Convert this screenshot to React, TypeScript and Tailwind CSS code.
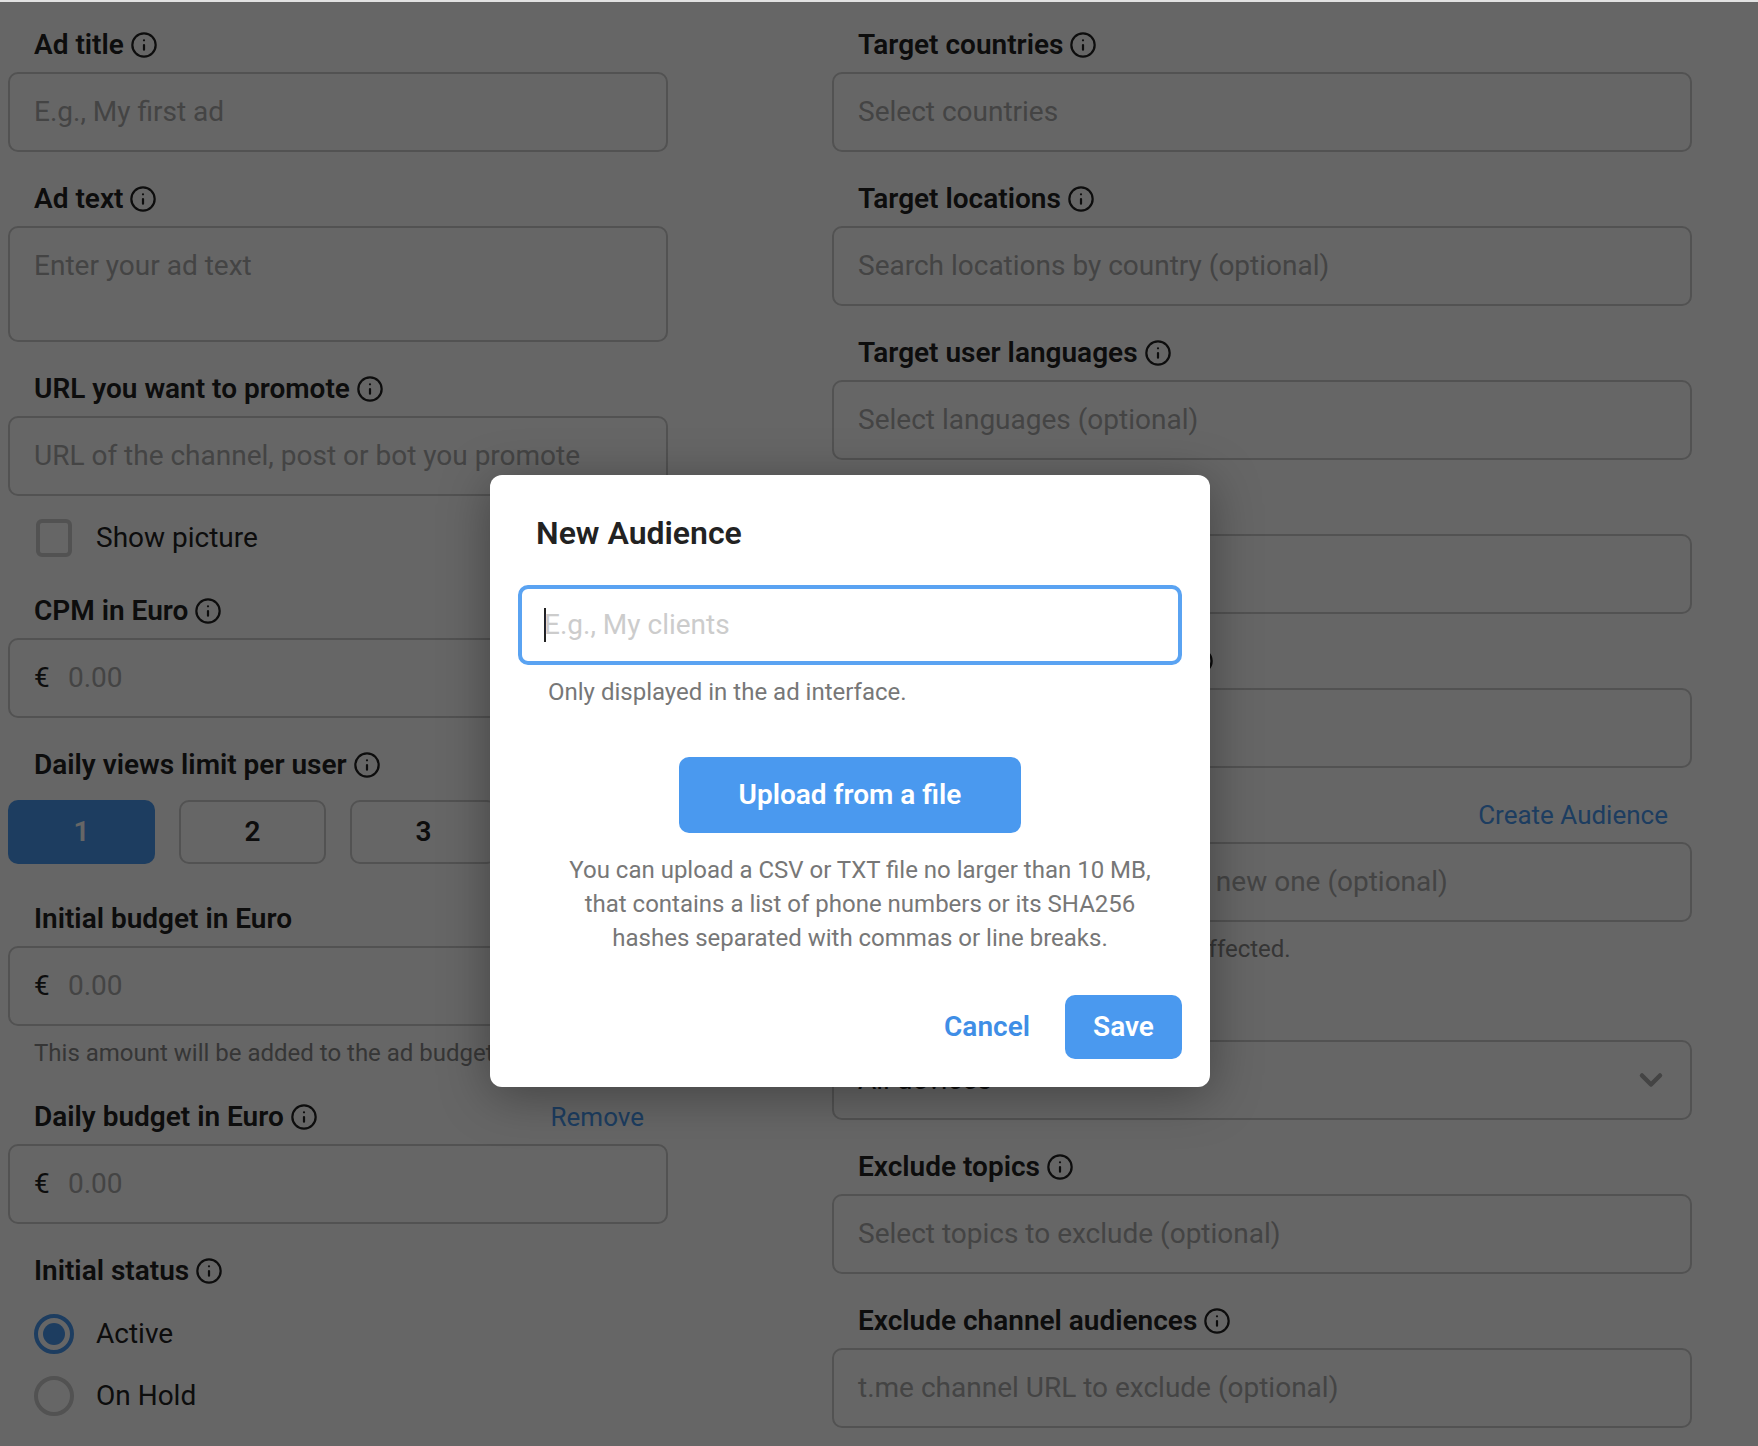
import { ReactNode } from "react";
import { ChevronDown, Info } from "lucide-react";

function Label({ text, info = true, action }: { text: string; info?: boolean; action?: string }) {
  return (
    <div className="mb-[13px] flex h-[28px] items-center pl-[26px] pr-[24px] text-[28px] font-semibold text-[#222222]">
      <span>{text}</span>
      {info && <Info className="ml-[6px] h-[28px] w-[28px] shrink-0" strokeWidth={1.9} />}
      {action && <span className="ml-auto text-[26px] font-normal text-[#4a99ef]">{action}</span>}
    </div>
  );
}

function Box({ children, h = "h-[80px]" }: { children?: ReactNode; h?: string }) {
  return (
    <div className={`${h} rounded-[10px] border-2 border-[#cccccc] px-[24px] text-[28px] text-[#aaaaaa]`}>
      {children}
    </div>
  );
}

function TextField({ label, placeholder, action }: { label: string; placeholder: string; action?: string }) {
  return (
    <div className="mb-[33px]">
      <Label text={label} action={action} />
      <Box>
        <div className="flex h-full items-center">{placeholder}</div>
      </Box>
    </div>
  );
}

function MoneyField({ label, info, action }: { label: string; info?: boolean; action?: string }) {
  return (
    <div>
      <Label text={label} info={info} action={action} />
      <Box>
        <div className="flex h-full items-center">
          <span className="w-[34px] text-[#222222]">€</span>
          <span>0.00</span>
        </div>
      </Box>
    </div>
  );
}

function LeftColumn() {
  return (
    <div>
      <TextField label="Ad title" placeholder="E.g., My first ad" />
      <div className="mb-[33px]">
        <Label text="Ad text" />
        <Box h="h-[116px]">
          <div className="pt-[22px] leading-[32px]">Enter your ad text</div>
        </Box>
      </div>
      <div>
        <Label text="URL you want to promote" />
        <Box>
          <div className="flex h-full items-center">URL of the channel, post or bot you promote</div>
        </Box>
      </div>
      <div className="mt-[23px] flex h-[38px] items-center pl-[28px] text-[28px] text-[#222222]">
        <span className="h-[38px] w-[36px] rounded-[6px] border-4 border-[#cccccc]" />
        <span className="ml-[24px]">Show picture</span>
      </div>
      <div className="mt-[40px]">
        <MoneyField label="CPM in Euro" />
      </div>
      <div className="mt-[33px]">
        <div className="pb-[8px]">
          <Label text="Daily views limit per user" />
        </div>
        <div className="grid grid-cols-4 gap-[24px] text-[28px] font-semibold text-[#222222]">
          <div className="flex h-[64px] items-center justify-center rounded-[10px] bg-[#4a99ef] text-white">1</div>
          {["2", "3", "4"].map((n) => (
            <div key={n} className="flex h-[64px] items-center justify-center rounded-[10px] border-2 border-[#cccccc]">
              {n}
            </div>
          ))}
        </div>
      </div>
      <div className="mt-[41px]">
        <MoneyField label="Initial budget in Euro" info={false} />
      </div>
      <div className="mt-[10px] h-[34px] whitespace-nowrap pl-[26px] text-[24px] leading-[34px] text-[#888888]">
        This amount will be added to the ad budget immediately.
      </div>
      <div className="mt-[33px]">
        <MoneyField label="Daily budget in Euro" action="Remove" />
      </div>
      <div className="mt-[33px]">
        <Label text="Initial status" />
      </div>
      <div className="mt-[29px] flex h-[40px] items-center pl-[26px] text-[28px] text-[#222222]">
        <span className="flex h-[40px] w-[40px] items-center justify-center rounded-full border-[4px] border-[#4a99ef]">
          <span className="h-[22px] w-[22px] rounded-full bg-[#4a99ef]" />
        </span>
        <span className="ml-[22px]">Active</span>
      </div>
      <div className="mt-[22px] flex h-[40px] items-center pl-[26px] text-[28px] text-[#222222]">
        <span className="h-[40px] w-[40px] rounded-full border-[4px] border-[#cccccc]" />
        <span className="ml-[22px]">On Hold</span>
      </div>
    </div>
  );
}

function RightColumn() {
  return (
    <div>
      <TextField label="Target countries" placeholder="Select countries" />
      <TextField label="Target locations" placeholder="Search locations by country (optional)" />
      <TextField label="Target user languages" placeholder="Select languages (optional)" />
      <TextField label="Target topics" placeholder="Select topics (optional)" />
      <TextField label="Target channel audiences" placeholder="t.me channel URL (optional)" />
      <div>
        <Label text="Target audience" info={false} action="Create Audience" />
        <Box>
          <div className="flex h-full items-center">Select audiences or create a new one (optional)</div>
        </Box>
      </div>
      <div className="mt-[10px] h-[34px] pl-[26px] text-[24px] leading-[34px] text-[#888888]">
        Only users in your audience are affected.
      </div>
      <div className="mt-[33px]">
        <Label text="Target device" />
        <Box>
          <div className="flex h-full items-center justify-between text-[#222222]">
            <span>All devices</span>
            <ChevronDown className="-mr-[3px] h-[36px] w-[36px] text-[#aaaaaa]" strokeWidth={3} />
          </div>
        </Box>
      </div>
      <div className="mt-[33px]">
        <TextField label="Exclude topics" placeholder="Select topics to exclude (optional)" />
      </div>
      <TextField label="Exclude channel audiences" placeholder="t.me channel URL to exclude (optional)" />
    </div>
  );
}

function AudienceModal() {
  return (
    <div className="absolute left-[490px] top-[473px] h-[612px] w-[720px] rounded-[12px] bg-white px-[28px] pt-[38px] font-['Roboto',sans-serif] shadow-[0_8px_50px_rgba(0,0,0,0.35)]">
      <div className="h-[40px] pl-[18px] text-[32px] font-semibold leading-[40px] text-[#222222]">New Audience</div>
      <div className="mt-[32px] flex h-[80px] items-center rounded-[10px] border-[4px] border-[#5aa3f2] pl-[22px] text-[28px] text-[#cccccc]">
        <span className="mr-[-2px] h-[34px] w-[2px] bg-[#222222]" />
        <span>E.g., My clients</span>
      </div>
      <div className="mt-[10px] pl-[30px] text-[24px] leading-[34px] text-[#777777]">Only displayed in the ad interface.</div>
      <div className="mt-[48px] flex justify-center">
        <div className="flex h-[76px] w-[342px] items-center justify-center rounded-[10px] bg-[#4a99ef] text-[28px] font-semibold text-white">
          Upload from a file
        </div>
      </div>
      <div className="mt-[20px] pl-[20px] text-center text-[24px] leading-[34px] text-[#777777]">
        You can upload a CSV or TXT file no larger than 10 MB,
        <br />
        that contains a list of phone numbers or its SHA256
        <br />
        hashes separated with commas or line breaks.
      </div>
      <div className="mt-[40px] flex items-center justify-end">
        <span className="mr-[35px] text-[28px] font-semibold text-[#3f8ee6]">Cancel</span>
        <div className="flex h-[64px] w-[117px] items-center justify-center rounded-[10px] bg-[#4a99ef] text-[28px] font-semibold text-white">
          Save
        </div>
      </div>
    </div>
  );
}

export default function App() {
  return (
    <div className="h-[1446px] w-[1758px] overflow-hidden bg-white font-['Roboto',sans-serif]">
      <div className="h-[2px] bg-[#e2e2e2]" />
      <div className="relative h-[1444px] overflow-hidden">
        <div className="grid grid-cols-[660px_860px] gap-x-[164px] pl-[8px] pt-[29px]">
          <LeftColumn />
          <RightColumn />
        </div>
        <div className="absolute inset-0 bg-black/60" />
        <AudienceModal />
      </div>
    </div>
  );
}
